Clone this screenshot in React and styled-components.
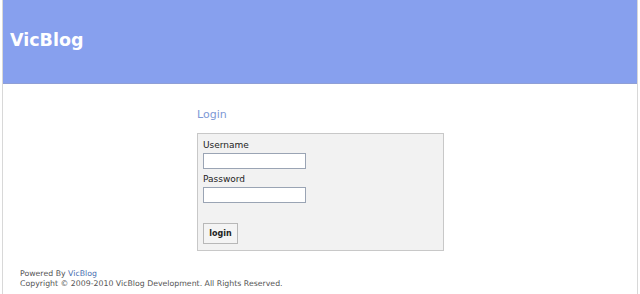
import styled, { createGlobalStyle } from 'styled-components';

const Global = createGlobalStyle`
  html, body { margin: 0; padding: 0; background: #fff; }
  body { font-family: "DejaVu Sans", Verdana, sans-serif; }
`;

const Page = styled.div`
  margin: 0 2px;
  height: 294px;
  border-left: 1px solid #d8d8d8;
  border-right: 1px solid #d8d8d8;
  display: flex;
  flex-direction: column;
`;

const Header = styled.header`
  height: 83px;
  background: #87a0ee;
  border-bottom: 1px solid #8f9fd6;
  display: flex;
  align-items: center;
  padding-left: 7px;
`;

const Brand = styled.h1`
  margin: 0 0 4px;
  font-family: "DejaVu Sans", Verdana, sans-serif;
  font-size: 17.5px;
  font-weight: bold;
  color: #fff;
`;

const Main = styled.main`
  flex: 1;
  padding: 24px 0 0 194px;
`;

const Title = styled.h2`
  margin: 0 0 12px;
  font-size: 11px;
  font-weight: normal;
  color: #7d98d6;
`;

const Box = styled.form`
  width: 247px;
  height: 118px;
  box-sizing: border-box;
  background: #f2f2f2;
  border: 1px solid #c8c8c8;
  padding: 5px 5px;
  display: flex;
  flex-direction: column;
`;

const Label = styled.label`
  font-size: 9px;
  color: #222;
  line-height: 12px;
  margin-top: ${p => p.$top || 0}px;
`;

const Input = styled.input`
  width: 103px;
  height: 16px;
  box-sizing: border-box;
  border: 1px solid #9aa4b4;
  background: #fff;
  margin: 2px 0 0;
  padding: 0;
`;

const Button = styled.button`
  margin-top: 20px;
  align-self: flex-start;
  width: 35px;
  height: 21px;
  font-family: "DejaVu Sans", Verdana, sans-serif;
  font-size: 8px;
  font-weight: bold;
  color: #222;
  background: #f4f4f4;
  border: 1px solid #b8b8b8;
  padding: 0;
`;

const Footer = styled.footer`
  padding: 0 0 5px 17px;
  font-size: 7.8px;
  line-height: 10px;
  color: #555;
  a { color: #4a6fb0; text-decoration: none; }
`;

export default function App() {
  return (
    <>
      <Global />
      <Page>
        <Header>
          <Brand>VicBlog</Brand>
        </Header>
        <Main>
          <Title>Login</Title>
          <Box onSubmit={e => e.preventDefault()}>
            <Label>Username</Label>
            <Input type="text" />
            <Label $top={4}>Password</Label>
            <Input type="password" />
            <Button type="submit">login</Button>
          </Box>
        </Main>
        <Footer>
          <div>Powered By <a href="#">VicBlog</a></div>
          <div>Copyright © 2009-2010 VicBlog Development. All Rights Reserved.</div>
        </Footer>
      </Page>
    </>
  );
}
